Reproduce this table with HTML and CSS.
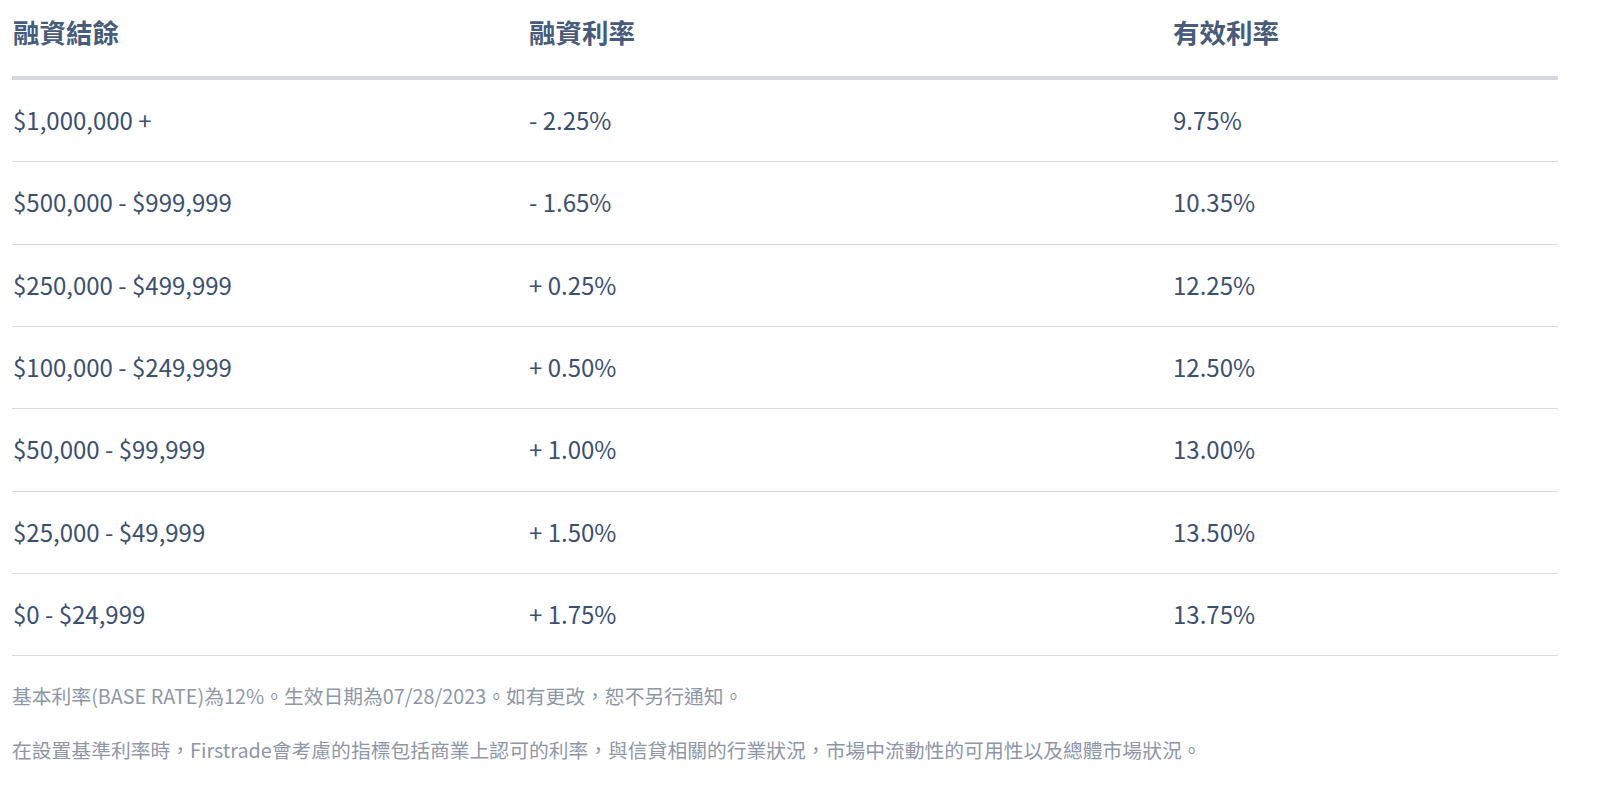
FILE: index.html
```html
<!DOCTYPE html>
<html lang="zh-Hant">
<head>
<meta charset="utf-8">
<title>融資利率</title>
<link rel="stylesheet" href="styles.css">
</head>
<body>
<div class="page">
  <div class="rate-table">
    <div class="row head">
      <div class="cell">融資結餘</div>
      <div class="cell">融資利率</div>
      <div class="cell">有效利率</div>
    </div>
    <div class="row">
      <div class="cell">$1,000,000 +</div>
      <div class="cell">- 2.25%</div>
      <div class="cell">9.75%</div>
    </div>
    <div class="row">
      <div class="cell">$500,000 - $999,999</div>
      <div class="cell">- 1.65%</div>
      <div class="cell">10.35%</div>
    </div>
    <div class="row">
      <div class="cell">$250,000 - $499,999</div>
      <div class="cell">+ 0.25%</div>
      <div class="cell">12.25%</div>
    </div>
    <div class="row">
      <div class="cell">$100,000 - $249,999</div>
      <div class="cell">+ 0.50%</div>
      <div class="cell">12.50%</div>
    </div>
    <div class="row">
      <div class="cell">$50,000 - $99,999</div>
      <div class="cell">+ 1.00%</div>
      <div class="cell">13.00%</div>
    </div>
    <div class="row">
      <div class="cell">$25,000 - $49,999</div>
      <div class="cell">+ 1.50%</div>
      <div class="cell">13.50%</div>
    </div>
    <div class="row">
      <div class="cell">$0 - $24,999</div>
      <div class="cell">+ 1.75%</div>
      <div class="cell">13.75%</div>
    </div>
  </div>
  <p class="note first">基本利率(BASE RATE)為12%。生效日期為07/28/2023。如有更改，恕不另行通知。</p>
  <p class="note">在設置基準利率時，Firstrade會考慮的指標包括商業上認可的利率，與信貸相關的行業狀況，市場中流動性的可用性以及總體市場狀況。</p>
</div>
</body>
</html>
```
FILE: styles.css
```css
html, body {
  margin: 0;
  padding: 0;
  background: #ffffff;
}
body {
  font-family: "Noto Sans CJK SC", "Noto Sans CJK TC", sans-serif;
  color: #3b5071;
}
.page {
  padding: 0 42px 0 12px;
}
.rate-table {
  display: flex;
  flex-direction: column;
}
.row {
  display: grid;
  grid-template-columns: 516px 644px 1fr;
  border-bottom: 1px solid #d9dbe1;
  font-size: 24px;
  line-height: 33.33px;
}
.row .cell {
  padding: 23px 0 25px 1px;
  white-space: nowrap;
}
.row.head {
  border-bottom: 4px solid #d6d8dd;
  font-size: 26.5px;
  font-weight: 700;
  color: #475b7a;
  line-height: 40px;
}
.row.head .cell {
  padding: 12px 0 24px 1px;
}
.note {
  margin: 24px 0 0 0;
  font-size: 19.8px;
  line-height: 30px;
  color: #8e97a8;
  white-space: nowrap;
}
.note.first {
  margin-top: 25px;
}
```
